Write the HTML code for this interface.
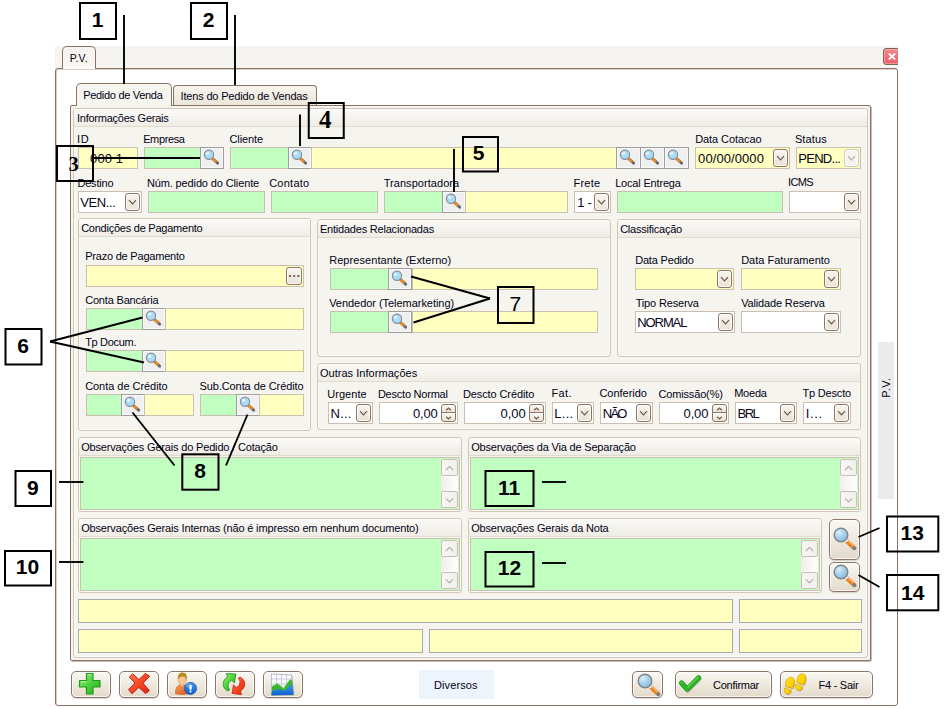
<!DOCTYPE html>
<html><head><meta charset="utf-8"><title>P.V.</title>
<style>
html,body{margin:0;padding:0;background:#fff}
#r{position:relative;width:946px;height:709px;overflow:hidden;background:#fff;font-family:"Liberation Sans",sans-serif}
#r div,#r span,#r svg{position:absolute;box-sizing:border-box}
.l{font-size:11px;line-height:13px;color:#020214;white-space:nowrap;letter-spacing:-0.25px}
.t{font-size:13px;line-height:20px;color:#08041c;white-space:nowrap;top:1px;left:2px}
.f{height:22px;border:1px solid #cbbfb2}
.q{border-color:#a9a9b1}.g{background:#c0ffc0}.y{background:#ffffc0}.w{background:#fff}
.sb{width:24px;height:22px;border:1px solid #9e9e9e;background:#efefef;box-shadow:inset 0 0 0 1px #f8f8f8}
.sb svg{left:1px;top:0.2px;width:18px;height:18px}
.cb{width:15px;height:18px;border:1px solid #8f7567;border-radius:3px;background:linear-gradient(#f7f5f0,#f0ece3 50%,#e9e3d6);top:1px;box-shadow:inset 0 0 0 1px rgba(255,255,255,.8)}
.cb svg{left:2px;top:5px;width:9px;height:7px}
.cb.d{border-color:#cfc8c0;background:#f4f3ee}
.gb{border:1px solid #d1c7b6;border-radius:3px;background:#f5f4ef;box-shadow:inset 0 0 0 1px #fbfaf8}
.gh{left:0;top:0;right:0;height:18px;background:linear-gradient(#fbfaf8,#efece5);border-bottom:1px solid #e0dbd0;border-radius:2px 2px 0 0}
.gh .l{left:3px;top:3px}
.sp{width:15px;height:9px;border:1px solid #8f7567;border-radius:2px;background:linear-gradient(#fdfcfa,#e8e1d3)}
.bb{height:27px;top:671px;border:1px solid #8f7567;border-radius:5px;background:linear-gradient(#faf8f3,#ece6d9 60%,#e2dacb);box-shadow:inset 0 0 0 1px rgba(255,255,255,.7),0 1px 1px rgba(120,100,90,.25)}
.ta{border:1px solid #cbbfb2;background:#c0ffc0}
.sc{width:17px;top:1px;bottom:1px;right:1px;background:linear-gradient(90deg,#f1efe9,#fff)}
.sc i{position:absolute;left:0;width:17px;height:17px;box-sizing:border-box;border:1px solid #c9bfb8;border-radius:2px;background:linear-gradient(90deg,#f8f7f4,#f1efea)}
</style></head><body>
<div id="r">
<svg width="0" height="0" style="left:0;top:0;width:0;height:0;overflow:hidden"><defs>
<symbol id="mg" viewBox="0 0 18 18">
<line x1="10.5" y1="10.5" x2="15.6" y2="15.2" stroke="#6b6b6b" stroke-width="3" stroke-linecap="round"/>
<line x1="10.6" y1="10.6" x2="14.2" y2="13.9" stroke="#f08a1c" stroke-width="2.6"/>
<circle cx="7" cy="6.8" r="4.6" fill="#a9dcf7" stroke="#8a8f96" stroke-width="1.2"/>
<circle cx="5.6" cy="5.3" r="1.6" fill="#e8f7ff" opacity=".9"/>
</symbol>
<symbol id="cv" viewBox="0 0 9 7"><path d="M1 1.2 L4.5 5 L8 1.2" fill="none" stroke="#6b5546" stroke-width="1.15"/></symbol>
<symbol id="cvd" viewBox="0 0 9 7"><path d="M1 1.2 L4.5 5 L8 1.2" fill="none" stroke="#bdb6ae" stroke-width="1.3"/></symbol>
<symbol id="cvu" viewBox="0 0 9 7"><path d="M1 5 L4.5 1.4 L8 5" fill="none" stroke="#b7afa6" stroke-width="1.2"/></symbol>
<symbol id="cvl" viewBox="0 0 9 7"><path d="M1 1.4 L4.5 5 L8 1.4" fill="none" stroke="#b7afa6" stroke-width="1.2"/></symbol>
<linearGradient id="gG" x1="0" y1="0" x2="1" y2="1"><stop offset="0" stop-color="#9af07c"/><stop offset=".5" stop-color="#4fd23c"/><stop offset="1" stop-color="#23a81e"/></linearGradient>
<linearGradient id="gR" x1="0" y1="0" x2="1" y2="1"><stop offset="0" stop-color="#ff7a55"/><stop offset=".6" stop-color="#f2401f"/><stop offset="1" stop-color="#d52712"/></linearGradient>
<linearGradient id="gB" x1="0" y1="0" x2="0" y2="1"><stop offset="0" stop-color="#3f97ef"/><stop offset="1" stop-color="#0d5fd0"/></linearGradient>
<linearGradient id="gO" x1="0" y1="0" x2="1" y2="1"><stop offset="0" stop-color="#f9a25a"/><stop offset="1" stop-color="#d9561c"/></linearGradient>
<linearGradient id="gY" x1="0" y1="0" x2="1" y2="1"><stop offset="0" stop-color="#ffe22e"/><stop offset=".6" stop-color="#ffd000"/><stop offset="1" stop-color="#eeb600"/></linearGradient>
<symbol id="plus" viewBox="0 0 24 23"><path d="M8.5 1.5h6.5v7h7v6.5h-7v7h-6.5v-7h-7v-6.5h7z" fill="url(#gG)" stroke="#1f9a1c" stroke-width="1.2" stroke-linejoin="round"/><path d="M9.6 2.8h4.2M2.8 9.8h6" stroke="#c9ffb5" stroke-width="1" opacity=".8"/></symbol>
<symbol id="xx" viewBox="0 0 24 23"><path d="M5.5 1.8 L12 7.6 L18.2 1.5 L22.6 4.2 L16 11.2 L22.3 18.6 L18.6 21.6 L11.8 15.4 L5 21.8 L1.6 17.6 L8 11 L2.4 5.2 Z" fill="url(#gR)" stroke="#c4200e" stroke-width="1" stroke-linejoin="round"/></symbol>
<symbol id="usr" viewBox="0 0 24 23"><path d="M1.6 21.8 C1.2 15.6 3.6 12.7 8.2 12.4 C12.8 12.7 14.8 15.6 14.8 21.8 C10 22.6 5 22.6 1.6 21.8Z" fill="url(#gO)" stroke="#c9501a" stroke-width=".6"/><path d="M6.3 12.2 L8.2 14.8 L10.1 12.2Z" fill="#cfe2f0"/><ellipse cx="8.2" cy="7.9" rx="4.1" ry="4.9" fill="#f9c592" stroke="#d99a5c" stroke-width=".6"/><path d="M3.9 7.6 C3.2 3.2 5.4 0.5 8.6 0.5 C12.2 0.5 13.4 3.6 12.7 7.4 C12.6 8.2 12.3 8.8 12.3 8.8 C12.2 6.2 11.2 4.7 9.5 4.5 C7 4.2 5 5.2 3.9 7.6Z" fill="#b8891f"/><circle cx="16.5" cy="16.4" r="6" fill="url(#gB)" stroke="#0f4fae" stroke-width=".8"/><ellipse cx="15.2" cy="13.6" rx="3.4" ry="2" fill="#8cc4ff" opacity=".45"/><rect x="15.3" y="13.1" width="2.4" height="4.6" rx=".6" fill="#fff"/><rect x="15.5" y="18.6" width="2" height="1.8" rx=".6" fill="#fff"/></symbol>
<symbol id="rfr" viewBox="0 0 24 24"><path d="M5.4 18.9 C0 15.5 -0.5 9 5.5 5 L4.4 1.5 L13.9 2 L12.4 10.9 L9.6 8.2 C5.5 11 5 15 7.8 17.8Z" fill="url(#gG)" stroke="#1c8f1a" stroke-width=".8" stroke-linejoin="round"/><path d="M18.4 5.2 C24 8.5 24.5 15 18.5 19 L19.4 22.6 L10.2 21.4 L11.4 12.8 L14.4 15.6 C18.5 13 19 9 16.2 6.2Z" fill="url(#gR)" stroke="#c4200e" stroke-width=".8" stroke-linejoin="round"/></symbol>
<symbol id="cht" viewBox="0 0 24 23"><path d="M1.4 2 L21.5 3 L23.3 22.4 L1.4 22.9Z" fill="#777" opacity=".35"/><path d="M0.4 1 L20.5 2 L22.5 21.8 L0.4 22.3Z" fill="#fbfbfe" stroke="#9a9cb4" stroke-width=".7"/><path d="M5.5 1.4v12M10.5 1.6v14M15.5 1.9v9M0.6 6h20.3M0.6 11h20.6" stroke="#b9b8d4" stroke-width=".7"/><path d="M1.1 13.4 L6.6 10.6 L9.5 13 L12.6 15.4 L16 10.5 L19.5 6.4 L21.2 7.6 L22.5 21.8 L0.4 22.3Z" fill="#3db431"/><path d="M1.1 13.4 L6.6 10.6 L9.5 13 L12.6 15.4 L16 10.5 L19.5 6.4" fill="none" stroke="#63d24f" stroke-width=".9"/><path d="M1.1 17.9 L5 16.8 L10.6 16.4 L13.6 17.9 L17 14.5 L20.5 11.4 L21.6 12 L22.5 21.8 L0.4 22.3Z" fill="url(#gB)"/></symbol>
<symbol id="chk" viewBox="0 0 30 25"><path d="M6.2 11.9 L11.8 18.1 L23.2 6.7" fill="none" stroke="#6f6a62" stroke-opacity=".45" stroke-width="5" stroke-linecap="round" stroke-linejoin="round"/><path d="M5.5 10.9 L11.1 17.2 L22.6 5.7" fill="none" stroke="#17901a" stroke-width="5" stroke-linecap="round" stroke-linejoin="round"/><path d="M5.5 10.9 L11.1 17.2 L22.6 5.7" fill="none" stroke="#27bb1e" stroke-width="3.6" stroke-linecap="round" stroke-linejoin="round"/><path d="M5.2 10.2 L6 11 M12 15 L22.2 4.9" fill="none" stroke="#6fe457" stroke-width="1.1" stroke-linecap="round" opacity=".8"/></symbol>
<symbol id="ft" viewBox="0 0 30 25"><g id="ftL"><path d="M5.1 15 C4.8 9.8 7.1 6.1 10.4 6.1 C13.6 6.1 14.6 9.3 13.9 12.8 C13.6 14.8 13 16.2 12.2 17.3 Z M4 16.6 L10.8 19 C10.4 21.8 8.4 23.4 6.2 22.8 C4.2 22.2 3.5 19.4 4 16.6 Z" fill="#5a5a5a" opacity=".4"/><path d="M4.5 14.2 C4.2 9 6.5 5.3 9.8 5.3 C13 5.3 14 8.5 13.3 12 C13 14 12.4 15.4 11.6 16.5 Z" fill="url(#gY)" stroke="#d4a200" stroke-width=".7"/><path d="M3.4 15.8 L10.2 18.2 C9.8 21 7.8 22.6 5.6 22 C3.6 21.4 2.9 18.6 3.4 15.8 Z" fill="url(#gY)" stroke="#d4a200" stroke-width=".7"/></g><use href="#ftL" transform="translate(11.4,-3.5)"/></symbol>
<radialGradient id="gL" cx=".35" cy=".3" r=".8"><stop offset="0" stop-color="#dcf0fb"/><stop offset=".45" stop-color="#a9d2ec"/><stop offset="1" stop-color="#86b8dc"/></radialGradient>
<symbol id="mgb" viewBox="0 0 24 24">
<line x1="13" y1="13.4" x2="21.4" y2="21.2" stroke="#7d7d7d" stroke-width="4" stroke-linecap="round"/>
<line x1="13" y1="13.4" x2="20.2" y2="20.1" stroke="#f4811a" stroke-width="4"/>
<line x1="14.2" y1="12.9" x2="20.6" y2="18.9" stroke="#ffbe78" stroke-width="1.3" opacity=".95"/>
<line x1="12.2" y1="12.6" x2="14.2" y2="14.5" stroke="#eef2f5" stroke-width="3.6"/>
<circle cx="8" cy="8" r="6.8" fill="url(#gL)" stroke="#7f858d" stroke-width="1.4"/>
</symbol>
</defs></svg>

<!-- title strip / window -->
<div style="left:55px;top:46px;width:843px;height:23px;background:#f5f4f0"></div>
<div style="left:55px;top:68px;width:843px;height:638px;border:1px solid #8d7263;border-radius:3px;background:#fff;box-shadow:inset 1px 1px 0 #d9cfc6"></div>
<div style="left:62px;top:46px;width:34px;height:23px;border:1px solid #8d7263;border-bottom:none;border-radius:5px 5px 0 0;background:linear-gradient(#f5f4f0 70%,#fdfdfc)"><span class="l" style="left:6.7px;top:5px;font-size:10.5px;letter-spacing:0.15px">P.V.</span></div>
<div style="left:883px;top:48px;width:15px;height:17px;overflow:hidden"><div style="left:0;top:0;width:19px;height:17px;border:1px solid #7c6557;border-radius:3px;background:linear-gradient(#f4898e,#ef6f76 55%,#ec6269);box-shadow:inset 0 0 0 1px rgba(255,190,190,.55)"><svg style="left:3.6px;top:3.8px" width="8" height="7" viewBox="0 0 8 7"><path d="M0.8 0.6L7.2 6.4M7.2 0.6L0.8 6.4" stroke="#fff" stroke-width="1.9"/></svg></div></div>
<div style="left:878px;top:342px;width:16px;height:157px;background:#ebebec"><span class="l" style="left:-6px;top:38.5px;width:28px;transform:rotate(-90deg);font-size:11px;letter-spacing:0.5px;text-align:center">P.V.</span></div>

<!-- tabs -->
<div style="left:173px;top:85px;width:144px;height:21px;border:1px solid #8d7263;border-bottom:none;border-radius:4px 4px 0 0;background:linear-gradient(#f7f4ee,#ebe5d9)"><span class="l" style="left:6.6px;top:3.5px;letter-spacing:-0.18px">Itens do Pedido de Vendas</span></div>
<div id="pn" style="left:70px;top:105px;width:801px;height:556px;border:1px solid #8d7263;border-radius:2px;background:#f5f4ef;box-shadow:1px 1px 0 #c9bdb3"></div>
<div style="left:76px;top:83px;width:96px;height:23px;border:1px solid #8d7263;border-bottom:none;border-radius:5px 5px 0 0;background:#f5f4ef"><span class="l" style="left:6.2px;top:5px;letter-spacing:-0.3px">Pedido de Venda</span></div>

<!-- Informações Gerais -->
<div class="gb" style="left:73px;top:108px;width:795px;height:550px"><div class="gh" style="height:18px"><span class="l">Informações Gerais</span></div></div>

<span class="l" style="left:76.9px;top:132.5px;letter-spacing:0.8px;">ID</span>
<div class="f y" style="left:78px;top:147px;width:60px;height:22px"><span class="t" style="left:11.1px;letter-spacing:0.113px;">000 1</span></div>
<span class="l" style="left:143.15px;top:132.5px;letter-spacing:-0.372px;">Empresa</span>
<div class="f g" style="left:144px;top:147px;width:57px;height:22px"></div>
<div class="sb" style="left:200px;top:147px;width:24px"><svg><use href="#mg"/></svg></div>
<span class="l" style="left:229.4px;top:132.5px;letter-spacing:-0.075px;">Cliente</span>
<div class="f g" style="left:230px;top:147px;width:59px;height:22px"></div>
<div class="sb" style="left:288px;top:147px;width:24px"><svg><use href="#mg"/></svg></div>
<div class="f y" style="left:311px;top:147px;width:306px;height:22px"></div>
<div class="sb" style="left:616px;top:147px;width:25px"><svg><use href="#mg"/></svg></div>
<div class="sb" style="left:640px;top:147px;width:25px"><svg><use href="#mg"/></svg></div>
<div class="sb" style="left:664px;top:147px;width:25px"><svg><use href="#mg"/></svg></div>
<span class="l" style="left:695.15px;top:132.5px;letter-spacing:-0.065px;">Data Cotacao</span>
<div class="f y" style="left:695px;top:147px;width:95px"><span class="t" style="left:2.1px;letter-spacing:0.08px;">00/00/0000</span><div class="cb" style="right:1px"><svg><use href="#cv"/></svg></div></div>
<span class="l" style="left:794.9px;top:132.5px;letter-spacing:0.123px;">Status</span>
<div class="f y" style="left:796px;top:147px;width:65px"><span class="t" style="left:1.35px;letter-spacing:-0.736px;">PEND...</span><div class="cb d" style="right:1px"><svg><use href="#cvd"/></svg></div></div>
<span class="l" style="left:77.4px;top:176.5px;letter-spacing:-0.166px;">Destino</span>
<div class="f w" style="left:78px;top:191px;width:64px"><span class="t" style="left:1.35px;letter-spacing:-0.406px;">VEN...</span><div class="cb" style="right:1px"><svg><use href="#cv"/></svg></div></div>
<span class="l" style="left:146.9px;top:176.5px;letter-spacing:-0.127px;">Núm. pedido do Cliente</span>
<div class="f g" style="left:148px;top:191px;width:117px;height:22px"></div>
<span class="l" style="left:269.15px;top:176.5px;letter-spacing:0.253px;">Contato</span>
<div class="f g" style="left:271px;top:191px;width:107px;height:22px"></div>
<span class="l" style="left:383.65px;top:176.5px;letter-spacing:0.057px;">Transportadora</span>
<div class="f g" style="left:384px;top:191px;width:59px;height:22px"></div>
<div class="sb" style="left:442px;top:191px;width:24px"><svg><use href="#mg"/></svg></div>
<div class="f y" style="left:465px;top:191px;width:103px;height:22px"></div>
<span class="l" style="left:573.4px;top:176.5px;letter-spacing:0.278px;">Frete</span>
<div class="f w" style="left:574px;top:191px;width:37px"><span class="t" style="left:2.35px;letter-spacing:-0.311px;">1 -</span><div class="cb" style="right:1px"><svg><use href="#cv"/></svg></div></div>
<span class="l" style="left:615.15px;top:176.5px;letter-spacing:-0.174px;">Local Entrega</span>
<div class="f g" style="left:617px;top:191px;width:166px;height:22px"></div>
<span class="l" style="left:787.9px;top:175.5px;letter-spacing:-0.567px;">ICMS</span>
<div class="f w" style="left:789px;top:191px;width:72px"><div class="cb" style="right:1px"><svg><use href="#cv"/></svg></div></div>
<div class="gb" style="left:78px;top:218px;width:233px;height:213px"><div class="gh" style="height:18px"><span class="l" style="left:2.15px;letter-spacing:-0.24px;">Condições de Pagamento</span></div></div>
<span class="l" style="left:85.15px;top:249.5px;letter-spacing:-0.209px;">Prazo de Pagamento</span>
<div class="f y" style="left:86px;top:265px;width:218px;height:22px"></div>
<div class="cb" style="left:286px;top:267px;width:16px;height:18px"><svg style="left:2px;top:7px;width:11px;height:2px" viewBox="0 0 11 2"><rect x="0" y="0" width="2" height="2" fill="#7a6252"/><rect x="4.2" y="0" width="2" height="2" fill="#7a6252"/><rect x="8.4" y="0" width="2" height="2" fill="#7a6252"/></svg></div>
<span class="l" style="left:85.15px;top:293.5px;letter-spacing:-0.175px;">Conta Bancária</span>
<div class="f g" style="left:86px;top:308px;width:57px;height:22px"></div>
<div class="sb" style="left:142px;top:308px;width:24px"><svg><use href="#mg"/></svg></div>
<div class="f y" style="left:165px;top:308px;width:139px;height:22px"></div>
<span class="l" style="left:85.15px;top:336.0px;letter-spacing:-0.312px;">Tp Docum.</span>
<div class="f g" style="left:86px;top:350px;width:57px;height:22px"></div>
<div class="sb" style="left:142px;top:350px;width:24px"><svg><use href="#mg"/></svg></div>
<div class="f y" style="left:165px;top:350px;width:139px;height:22px"></div>
<span class="l" style="left:85.15px;top:379.5px;letter-spacing:-0.041px;">Conta de Crédito</span>
<div class="f g" style="left:86px;top:394px;width:36px;height:22px"></div>
<div class="sb" style="left:121px;top:394px;width:24px"><svg><use href="#mg"/></svg></div>
<div class="f y" style="left:144px;top:394px;width:50px;height:22px"></div>
<span class="l" style="left:199.4px;top:379.5px;letter-spacing:-0.079px;">Sub.Conta de Crédito</span>
<div class="f g" style="left:200px;top:394px;width:37px;height:22px"></div>
<div class="sb" style="left:236px;top:394px;width:24px"><svg><use href="#mg"/></svg></div>
<div class="f y" style="left:259px;top:394px;width:45px;height:22px"></div>
<div class="gb" style="left:317px;top:219px;width:294px;height:138px"><div class="gh" style="height:18px"><span class="l" style="left:1.9px;letter-spacing:-0.207px;">Entidades Relacionadas</span></div></div>
<span class="l" style="left:329.15px;top:253.5px;letter-spacing:0.073px;">Representante (Externo)</span>
<div class="f g" style="left:330px;top:268px;width:59px;height:22px"></div>
<div class="sb" style="left:388px;top:268px;width:24px"><svg><use href="#mg"/></svg></div>
<div class="f y" style="left:412px;top:268px;width:186px;height:22px"></div>
<span class="l" style="left:329.15px;top:296.5px;letter-spacing:-0.04px;">Vendedor (Telemarketing)</span>
<div class="f g" style="left:330px;top:311px;width:59px;height:22px"></div>
<div class="sb" style="left:388px;top:311px;width:24px"><svg><use href="#mg"/></svg></div>
<div class="f y" style="left:412px;top:311px;width:186px;height:22px"></div>
<div class="gb" style="left:617px;top:219px;width:244px;height:138px"><div class="gh" style="height:18px"><span class="l" style="left:2.15px;letter-spacing:-0.23px;">Classificação</span></div></div>
<span class="l" style="left:635.15px;top:253.5px;letter-spacing:-0.175px;">Data Pedido</span>
<div class="f y" style="left:635px;top:268px;width:99px"><div class="cb" style="right:1px"><svg><use href="#cv"/></svg></div></div>
<span class="l" style="left:741.15px;top:253.5px;letter-spacing:0.01px;">Data Faturamento</span>
<div class="f y" style="left:741px;top:268px;width:100px"><div class="cb" style="right:1px"><svg><use href="#cv"/></svg></div></div>
<span class="l" style="left:635.65px;top:296.5px;letter-spacing:-0.156px;">Tipo Reserva</span>
<div class="f w" style="left:635px;top:311px;width:100px"><span class="t" style="left:1.35px;letter-spacing:-1.115px;">NORMAL</span><div class="cb" style="right:1px"><svg><use href="#cv"/></svg></div></div>
<span class="l" style="left:741.15px;top:296.5px;letter-spacing:-0.148px;">Validade Reserva</span>
<div class="f w" style="left:741px;top:311px;width:100px"><div class="cb" style="right:1px"><svg><use href="#cv"/></svg></div></div>
<div class="gb" style="left:317px;top:363px;width:544px;height:67px"><div class="gh" style="height:18px"><span class="l" style="left:1.9px;letter-spacing:0.042px;">Outras Informações</span></div></div>
<span class="l" style="left:327.15px;top:387.5px;letter-spacing:0.068px;">Urgente</span>
<div class="f w" style="left:328px;top:402px;width:45px"><span class="t" style="left:1.6px;letter-spacing:0.189px;">N...</span><div class="cb" style="right:1px"><svg><use href="#cv"/></svg></div></div>
<span class="l" style="left:377.9px;top:387.5px;letter-spacing:-0.225px;">Descto Normal</span>
<div class="f w" style="left:379px;top:402px;width:79px"><span class="t" style="left:33.1px;letter-spacing:-0.254px;">0,00</span><div class="sp" style="right:1px;top:1px;border-radius:3px 3px 0 0"><svg style="left:3px;top:2px" width="7" height="4" viewBox="0 0 7 4"><path d="M1.2 3.3L3.5 1.1L5.8 3.3" fill="none" stroke="#735d4e" stroke-width="1.35"/></svg></div><div class="sp" style="right:1px;top:9px;height:10px;border-radius:0 0 3px 3px"><svg style="left:3px;top:3px" width="7" height="4" viewBox="0 0 7 4"><path d="M1.2 0.7L3.5 2.9L5.8 0.7" fill="none" stroke="#735d4e" stroke-width="1.35"/></svg></div></div>
<span class="l" style="left:462.9px;top:387.5px;letter-spacing:-0.094px;">Descto Crédito</span>
<div class="f w" style="left:464px;top:402px;width:82px"><span class="t" style="left:35.6px;letter-spacing:-0.087px;">0,00</span><div class="sp" style="right:1px;top:1px;border-radius:3px 3px 0 0"><svg style="left:3px;top:2px" width="7" height="4" viewBox="0 0 7 4"><path d="M1.2 3.3L3.5 1.1L5.8 3.3" fill="none" stroke="#735d4e" stroke-width="1.35"/></svg></div><div class="sp" style="right:1px;top:9px;height:10px;border-radius:0 0 3px 3px"><svg style="left:3px;top:3px" width="7" height="4" viewBox="0 0 7 4"><path d="M1.2 0.7L3.5 2.9L5.8 0.7" fill="none" stroke="#735d4e" stroke-width="1.35"/></svg></div></div>
<span class="l" style="left:551.4px;top:386.5px;letter-spacing:0.366px;">Fat.</span>
<div class="f w" style="left:552px;top:402px;width:42px"><span class="t" style="left:1.35px;letter-spacing:0.241px;">L...</span><div class="cb" style="right:1px"><svg><use href="#cv"/></svg></div></div>
<span class="l" style="left:599.4px;top:386.5px;letter-spacing:-0.019px;">Conferido</span>
<div class="f w" style="left:600px;top:402px;width:53px"><span class="t" style="left:1.85px;letter-spacing:-1.811px;">NÃO</span><div class="cb" style="right:1px"><svg><use href="#cv"/></svg></div></div>
<span class="l" style="left:658.4px;top:387.5px;letter-spacing:-0.147px;">Comissão(%)</span>
<div class="f w" style="left:659px;top:402px;width:70px"><span class="t" style="left:23.6px;letter-spacing:-0.171px;">0,00</span><div class="sp" style="right:1px;top:1px;border-radius:3px 3px 0 0"><svg style="left:3px;top:2px" width="7" height="4" viewBox="0 0 7 4"><path d="M1.2 3.3L3.5 1.1L5.8 3.3" fill="none" stroke="#735d4e" stroke-width="1.35"/></svg></div><div class="sp" style="right:1px;top:9px;height:10px;border-radius:0 0 3px 3px"><svg style="left:3px;top:3px" width="7" height="4" viewBox="0 0 7 4"><path d="M1.2 0.7L3.5 2.9L5.8 0.7" fill="none" stroke="#735d4e" stroke-width="1.35"/></svg></div></div>
<span class="l" style="left:734.15px;top:386.5px;letter-spacing:-0.21px;">Moeda</span>
<div class="f w" style="left:735px;top:402px;width:62px"><span class="t" style="left:1.6px;letter-spacing:-1.623px;">BRL</span><div class="cb" style="right:1px"><svg><use href="#cv"/></svg></div></div>
<span class="l" style="left:802.4px;top:386.5px;letter-spacing:-0.168px;">Tp Descto</span>
<div class="f w" style="left:803px;top:402px;width:48px"><span class="t" style="left:1.85px;letter-spacing:0.616px;">I...</span><div class="cb" style="right:1px"><svg><use href="#cv"/></svg></div></div>
<div class="gb" style="left:78px;top:437px;width:384px;height:75px"><div class="gh" style="height:18px"><span class="l" style="left:2.15px;letter-spacing:-0.168px;">Observações Gerais do Pedido / Cotação</span></div></div>
<div class="ta" style="left:80px;top:457px;width:380px;height:53px"><div class="sc"><i style="top:0"><svg style="left:3px;top:4.5px" width="9" height="7"><use href="#cvu"/></svg></i><i style="bottom:0"><svg style="left:3px;top:4.5px" width="9" height="7"><use href="#cvl"/></svg></i></div></div>
<div class="gb" style="left:468px;top:437px;width:393px;height:75px"><div class="gh" style="height:18px"><span class="l" style="left:2.15px;letter-spacing:-0.187px;">Observações da Via de Separação</span></div></div>
<div class="ta" style="left:470px;top:457px;width:389px;height:53px"><div class="sc"><i style="top:0"><svg style="left:3px;top:4.5px" width="9" height="7"><use href="#cvu"/></svg></i><i style="bottom:0"><svg style="left:3px;top:4.5px" width="9" height="7"><use href="#cvl"/></svg></i></div></div>
<div class="gb" style="left:78px;top:518px;width:384px;height:75px"><div class="gh" style="height:18px"><span class="l" style="left:2.15px;letter-spacing:-0.154px;">Observações Gerais Internas (não é impresso em nenhum documento)</span></div></div>
<div class="ta" style="left:80px;top:538px;width:380px;height:53px"><div class="sc"><i style="top:0"><svg style="left:3px;top:4.5px" width="9" height="7"><use href="#cvu"/></svg></i><i style="bottom:0"><svg style="left:3px;top:4.5px" width="9" height="7"><use href="#cvl"/></svg></i></div></div>
<div class="gb" style="left:468px;top:518px;width:354px;height:75px"><div class="gh" style="height:18px"><span class="l" style="left:2.15px;letter-spacing:-0.172px;">Observações Gerais da Nota</span></div></div>
<div class="ta" style="left:470px;top:538px;width:350px;height:53px"><div class="sc"><i style="top:0"><svg style="left:3px;top:4.5px" width="9" height="7"><use href="#cvu"/></svg></i><i style="bottom:0"><svg style="left:3px;top:4.5px" width="9" height="7"><use href="#cvl"/></svg></i></div></div>
<div class="bb" style="left:829px;top:519px;width:31px;height:41px"><svg style="left:3px;top:6.5px" width="24" height="24"><use href="#mgb"/></svg></div>
<div class="bb" style="left:829px;top:562px;width:31px;height:30px"><svg style="left:3px;top:1px" width="24" height="24"><use href="#mgb"/></svg></div>
<div class="f y q" style="left:78px;top:599px;width:655px;height:24px"></div>
<div class="f y q" style="left:739px;top:599px;width:123px;height:24px"></div>
<div class="f y q" style="left:78px;top:629px;width:345px;height:24px"></div>
<div class="f y q" style="left:429px;top:629px;width:304px;height:24px"></div>
<div class="f y q" style="left:739px;top:629px;width:123px;height:24px"></div>
<div class="bb" style="left:71px;width:40px"><svg style="left:6px;top:0px" width="24" height="23" viewBox="0 0 24 23"><use href="#plus"/></svg></div>
<div class="bb" style="left:119px;width:40px"><svg style="left:6.5px;top:0px" width="24" height="23" viewBox="0 0 24 23"><use href="#xx"/></svg></div>
<div class="bb" style="left:167px;width:40px"><svg style="left:6px;top:0px" width="24" height="23" viewBox="0 0 24 23"><use href="#usr"/></svg></div>
<div class="bb" style="left:215px;width:40px"><svg style="left:6px;top:0px" width="24" height="24" viewBox="0 0 24 24"><use href="#rfr"/></svg></div>
<div class="bb" style="left:263px;width:40px"><svg style="left:7px;top:0.5px" width="24" height="23" viewBox="0 0 24 23"><use href="#cht"/></svg></div>
<div style="left:419px;top:670px;width:75px;height:29px;background:#eef4fc"><span class="l" style="left:15px;top:8.5px;letter-spacing:0.1px">Diversos</span></div>
<div class="bb" style="left:632px;width:31px"><svg style="left:3.5px;top:1px" width="24" height="24"><use href="#mgb"/></svg></div>
<div class="bb" style="left:675px;width:97px"><svg style="left:0;top:0" width="30" height="25" viewBox="0 0 30 25"><use href="#chk"/></svg><span class="l" style="left:37px;top:7px">Confirmar</span></div>
<div class="bb" style="left:780px;width:93px"><svg style="left:0;top:0" width="30" height="25" viewBox="0 0 30 25"><use href="#ft"/></svg><span class="l" style="left:37.5px;top:7px">F4 - Sair</span></div>
<svg style="left:0;top:0" width="946" height="709" viewBox="0 0 946 709"><rect x="80" y="3" width="36" height="36" fill="none" stroke="#000" stroke-width="2"/><text x="97.5" y="27.06" text-anchor="middle" font-family="Liberation Sans, sans-serif" font-weight="bold" font-size="21" fill="#000">1</text><line x1="124" y1="15" x2="124" y2="84" stroke="#000" stroke-width="1.9"/><rect x="191" y="3" width="36" height="36" fill="none" stroke="#000" stroke-width="2"/><text x="208.5" y="27.06" text-anchor="middle" font-family="Liberation Sans, sans-serif" font-weight="bold" font-size="21" fill="#000">2</text><line x1="235" y1="15" x2="235" y2="85" stroke="#000" stroke-width="1.9"/><rect x="57" y="146" width="36" height="35" fill="none" stroke="#000" stroke-width="2"/><text x="73.5" y="170.88" text-anchor="middle" font-family="Liberation Serif, serif" font-weight="bold" font-size="20.5" fill="#000">3</text><line x1="94" y1="158" x2="200" y2="158" stroke="#000" stroke-width="1.9"/><rect x="308.75" y="103" width="35" height="35" fill="none" stroke="#000" stroke-width="2"/><text x="325.25" y="127.5" text-anchor="middle" font-family="Liberation Serif, serif" font-weight="bold" font-size="25" fill="#000">4</text><line x1="300" y1="114.5" x2="300" y2="146" stroke="#000" stroke-width="1.9"/><rect x="463" y="137" width="35" height="34.5" fill="none" stroke="#000" stroke-width="2"/><text x="478.5" y="160.31" text-anchor="middle" font-family="Liberation Sans, sans-serif" font-weight="bold" font-size="21" fill="#000">5</text><line x1="454" y1="149" x2="454" y2="192" stroke="#000" stroke-width="1.9"/><rect x="5.5" y="329" width="36" height="35.5" fill="none" stroke="#000" stroke-width="2"/><text x="23.0" y="353.31" text-anchor="middle" font-family="Liberation Sans, sans-serif" font-weight="bold" font-size="21" fill="#000">6</text><line x1="50" y1="341.5" x2="142.5" y2="317.5" stroke="#000" stroke-width="1.9"/><line x1="50" y1="341.5" x2="144" y2="362.5" stroke="#000" stroke-width="1.9"/><rect x="498" y="287" width="35.5" height="36" fill="none" stroke="#000" stroke-width="2"/><text x="515.25" y="311.06" text-anchor="middle" font-family="Liberation Sans, sans-serif" font-weight="normal" font-size="21" fill="#000">7</text><line x1="411" y1="276.5" x2="490" y2="298.5" stroke="#000" stroke-width="1.9"/><line x1="413.5" y1="322.5" x2="490" y2="298.5" stroke="#000" stroke-width="1.9"/><rect x="182.3" y="454.3" width="36.2" height="35.4" fill="none" stroke="#000" stroke-width="2"/><text x="200.20000000000002" y="478.36" text-anchor="middle" font-family="Liberation Sans, sans-serif" font-weight="bold" font-size="21" fill="#000">8</text><line x1="132.5" y1="412.5" x2="174.5" y2="465.5" stroke="#000" stroke-width="1.9"/><line x1="247.5" y1="414.5" x2="226" y2="465.5" stroke="#000" stroke-width="1.9"/><rect x="15.5" y="471" width="35.5" height="35" fill="none" stroke="#000" stroke-width="2"/><text x="32.75" y="494.56" text-anchor="middle" font-family="Liberation Sans, sans-serif" font-weight="bold" font-size="21" fill="#000">9</text><line x1="59" y1="482" x2="83.5" y2="482" stroke="#000" stroke-width="1.9"/><rect x="5" y="551" width="46" height="34.5" fill="none" stroke="#000" stroke-width="2"/><text x="27.5" y="574.31" text-anchor="middle" font-family="Liberation Sans, sans-serif" font-weight="bold" font-size="21" fill="#000">10</text><line x1="59" y1="562" x2="83.5" y2="562" stroke="#000" stroke-width="1.9"/><rect x="485.5" y="471" width="48" height="35" fill="none" stroke="#000" stroke-width="2"/><text x="509.0" y="494.56" text-anchor="middle" font-family="Liberation Sans, sans-serif" font-weight="bold" font-size="21" fill="#000">11</text><line x1="542" y1="482" x2="566" y2="482" stroke="#000" stroke-width="1.9"/><rect x="485.5" y="552" width="48" height="34.5" fill="none" stroke="#000" stroke-width="2"/><text x="509.5" y="575.31" text-anchor="middle" font-family="Liberation Sans, sans-serif" font-weight="bold" font-size="21" fill="#000">12</text><line x1="542" y1="563" x2="566" y2="563" stroke="#000" stroke-width="1.9"/><rect x="887" y="516.5" width="51.3" height="35" fill="none" stroke="#000" stroke-width="2"/><text x="912.15" y="540.3599999999999" text-anchor="middle" font-family="Liberation Sans, sans-serif" font-weight="bold" font-size="21" fill="#000">13</text><line x1="858.5" y1="537" x2="879.5" y2="528" stroke="#000" stroke-width="1.9"/><rect x="887" y="575" width="51.3" height="35.3" fill="none" stroke="#000" stroke-width="2"/><text x="912.65" y="599.5099999999999" text-anchor="middle" font-family="Liberation Sans, sans-serif" font-weight="bold" font-size="21" fill="#000">14</text><line x1="858.5" y1="575" x2="879.5" y2="587" stroke="#000" stroke-width="1.9"/></svg>

</div>
</body></html>
